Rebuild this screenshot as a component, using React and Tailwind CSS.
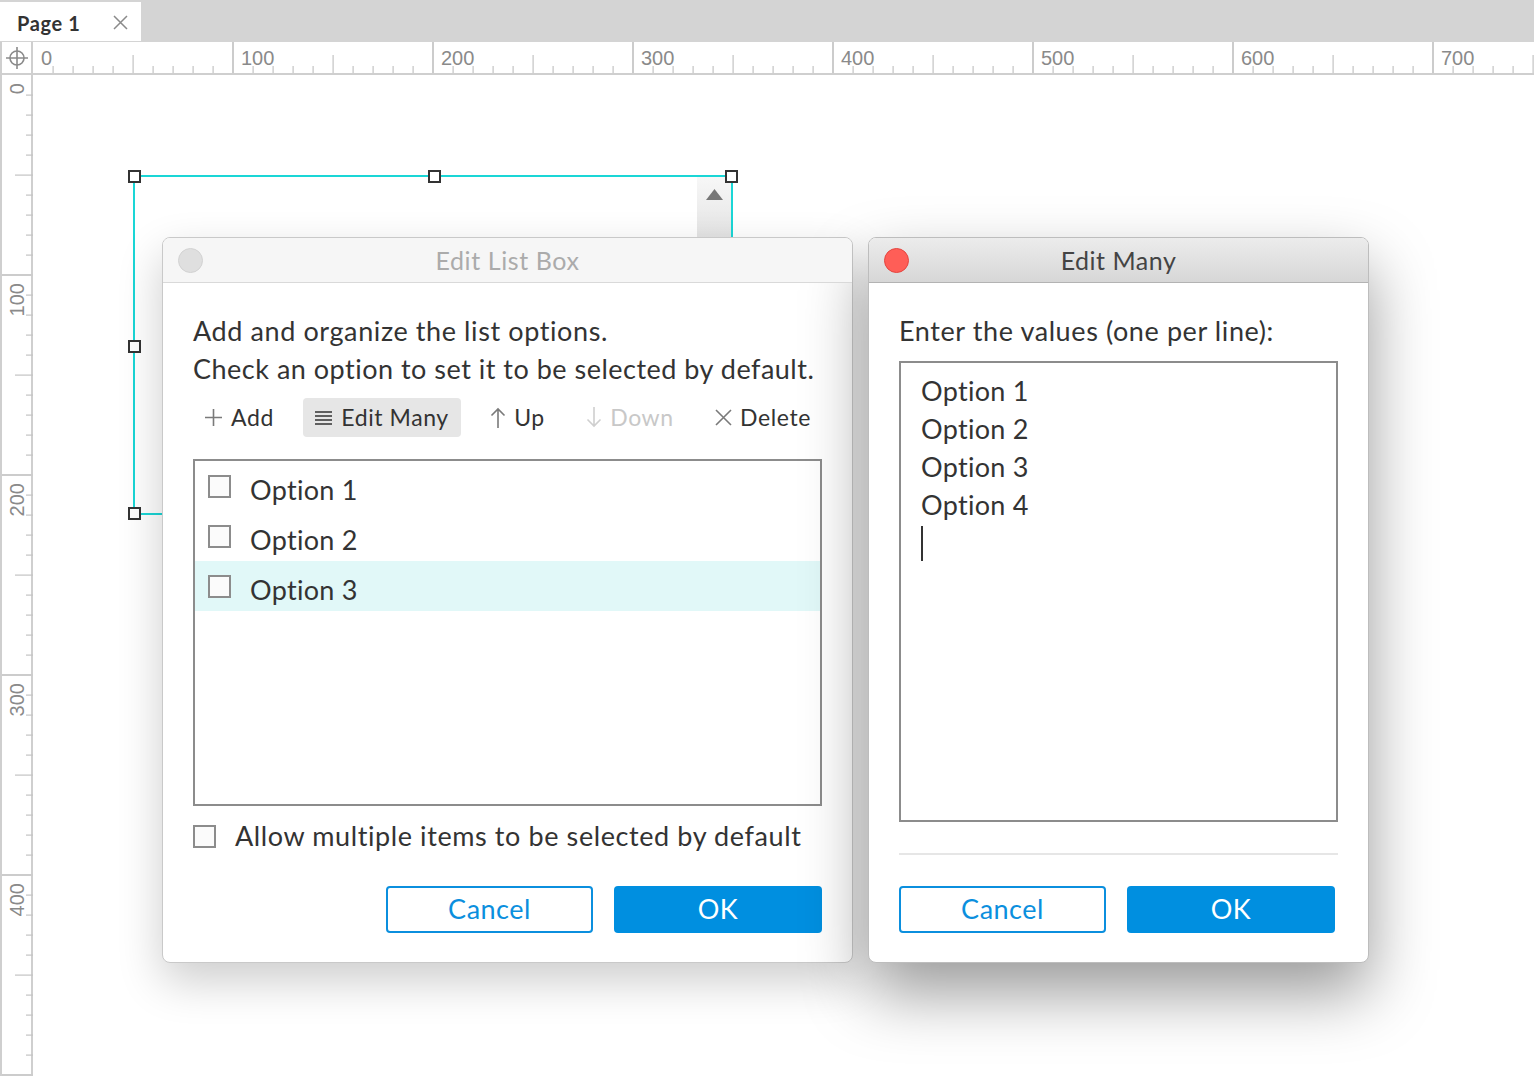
import React from "react";

const font = "font-['Lato','Noto_Sans',sans-serif]";

const HRuler = () => {
  const ticks = [];
  for (let j = 0; j <= 76; j++) {
    const x = j * 20;
    if (j % 10 === 0) continue;
    const h = j % 5 === 0 ? 18 : 7;
    ticks.push(<rect key={j} x={x - 0.5} y={31 - h} width="1.2" height={h} fill="#c4c4c4" />);
  }
  const majors = [];
  for (let k = 1; k <= 7; k++) {
    majors.push(<rect key={"m" + k} x={k * 200 - 1} y="0" width="2" height="31" fill="#cccccc" />);
  }
  const labels = [];
  for (let k = 0; k <= 7; k++) {
    labels.push(
      <text key={"l" + k} x={k * 200 + 8} y="23" fontSize="20" fill="#8a8a8a" fontFamily="Liberation Sans, Arial, sans-serif">
        {k * 100}
      </text>
    );
  }
  return (
    <svg width="1501" height="31" className="block">
      {ticks}
      {majors}
      {labels}
    </svg>
  );
};

const VRuler = () => {
  const ticks = [];
  for (let j = 0; j <= 50; j++) {
    const y = j * 20;
    if (j % 10 === 0) continue;
    const w = j % 5 === 0 ? 18 : 7;
    ticks.push(<rect key={j} x={31 - w} y={y - 0.5} width={w} height="1.2" fill="#c4c4c4" />);
  }
  const majors = [];
  for (let k = 1; k <= 5; k++) {
    majors.push(<rect key={"m" + k} x="0" y={k * 200 - 1} width="31" height="2" fill="#cccccc" />);
  }
  const labels = [];
  for (let k = 0; k <= 4; k++) {
    const y = k * 200 + 8;
    labels.push(
      <text
        key={"l" + k}
        x="22"
        y={y}
        fontSize="20"
        fill="#8a8a8a"
        textAnchor="end"
        transform={`rotate(-90 22 ${y})`}
        fontFamily="Liberation Sans, Arial, sans-serif"
      >
        {k * 100}
      </text>
    );
  }
  return (
    <svg width="31" height="1001" className="block">
      {ticks}
      {majors}
      {labels}
    </svg>
  );
};

const Handle = ({ className }) => (
  <div className={`absolute w-[13px] h-[13px] bg-white border-2 border-[#333] ${className}`}></div>
);

const Checkbox = () => (
  <div className="w-[23px] h-[23px] border-2 border-[#8c8c8c] bg-[#fbfbfb] shrink-0"></div>
);

const PlusIcon = () => (
  <svg width="19" height="19" viewBox="0 0 19 19" className="mr-[8px]">
    <path d="M9.5 1v17M1 9.5h17" stroke="#7a7a7a" strokeWidth="1.6" />
  </svg>
);

const LinesIcon = () => (
  <svg width="17" height="15" viewBox="0 0 17 15" className="mr-[9px]">
    <path d="M0 2h17M0 6h17M0 10h17M0 14h17" stroke="#333" strokeWidth="1.6" />
  </svg>
);

const ArrowIcon = ({ down, color }) => (
  <svg width="16" height="21" viewBox="0 0 16 21" className="mr-[8px]">
    {down ? (
      <path d="M8 0v19M1.5 12.5L8 19l6.5-6.5" stroke={color} strokeWidth="1.6" fill="none" />
    ) : (
      <path d="M8 21V2M1.5 8.5L8 2l6.5 6.5" stroke={color} strokeWidth="1.6" fill="none" />
    )}
  </svg>
);

const XIcon = () => (
  <svg width="17" height="17" viewBox="0 0 17 17" className="mr-[8px]">
    <path d="M1 1l15 15M16 1L1 16" stroke="#7a7a7a" strokeWidth="1.6" />
  </svg>
);

const ToolBtn = ({ icon, label, active, muted }) => (
  <div
    className={`flex items-center h-[39px] px-[12px] rounded-[4px] text-[23px] tracking-[0.6px] ${active ? "bg-[#e6e6e6]" : ""} ${
      muted ? "text-[#c8c8c8]" : "text-[#333]"
    }`}
  >
    {icon}
    <span>{label}</span>
  </div>
);

const Buttons = () => (
  <div className="flex gap-[21px]">
    <button className="w-[207px] h-[47px] rounded-[4px] border-2 border-[#0b8fde] text-[#0b8fde] text-[27px] tracking-[0.5px] bg-white">
      Cancel
    </button>
    <button className="w-[208px] h-[47px] rounded-[4px] bg-[#008fe0] text-white text-[27px] tracking-[0.5px]">OK</button>
  </div>
);

const EditListBox = () => (
  <div className="w-[691px] h-[726px] bg-white rounded-[8px] border border-[#c9c9c9] shadow-[0_18px_45px_rgba(0,0,0,0.2)] overflow-hidden flex flex-col">
    <div className="relative h-[45px] bg-[#f6f6f6] border-b border-[#d9d9d9] flex items-center justify-center shrink-0">
      <div className="absolute left-[15px] top-[10px] w-[25px] h-[25px] rounded-full bg-[#dfdfdf] border border-[#d2d2d2]"></div>
      <span className="text-[25px] tracking-[0.6px] text-[#ababab] pt-[2px]">Edit List Box</span>
    </div>
    <div className="px-[30px] pt-[29px] flex flex-col text-[#333]">
      <p className="text-[27px] leading-[38px] tracking-[0.6px]">Add and organize the list options.</p>
      <p className="text-[27px] leading-[38px] tracking-[0.5px]">Check an option to set it to be selected by default.</p>
      <div className="flex justify-between mt-[10px] ml-[-1px] mr-[-1px]">
        <ToolBtn icon={<PlusIcon />} label="Add" />
        <ToolBtn icon={<LinesIcon />} label="Edit Many" active />
        <ToolBtn icon={<ArrowIcon color="#7a7a7a" />} label="Up" />
        <ToolBtn icon={<ArrowIcon down color="#cfcfcf" />} label="Down" muted />
        <ToolBtn icon={<XIcon />} label="Delete" />
      </div>
      <div className="mt-[22px] h-[347px] border-2 border-[#8c8c8c] flex flex-col">
        {["Option 1", "Option 2", "Option 3"].map((o, i) => (
          <div
            key={o}
            className={`h-[50px] flex items-center pl-[13px] gap-[19px] text-[27px] tracking-[0.3px] ${i === 2 ? "bg-[#e1f8f8]" : ""}`}
          >
            <Checkbox />
            <span className="leading-none pt-[6px]">{o}</span>
          </div>
        ))}
      </div>
      <div className="mt-[11px] h-[38px] flex items-center gap-[19px] text-[27px] tracking-[0.6px]">
        <Checkbox />
        <span>Allow multiple items to be selected by default</span>
      </div>
      <div className="mt-[31px] flex justify-end">
        <Buttons />
      </div>
    </div>
  </div>
);

const EditMany = () => (
  <div className="w-[501px] h-[726px] bg-white rounded-[8px] border border-[#bdbdbd] shadow-[0_30px_65px_rgba(0,0,0,0.4)] overflow-hidden flex flex-col">
    <div className="relative h-[45px] bg-gradient-to-b from-[#ececec] to-[#d7d7d7] border-b border-[#b3b3b3] flex items-center justify-center shrink-0">
      <div className="absolute left-[15px] top-[10px] w-[25px] h-[25px] rounded-full bg-[#ff5e57] border border-[#e4453f]"></div>
      <span className="text-[25px] tracking-[0.5px] text-[#444] pt-[2px]">Edit Many</span>
    </div>
    <div className="px-[30px] pt-[29px] flex flex-col text-[#333]">
      <p className="text-[27px] leading-[38px] tracking-[0.6px]">Enter the values (one per line):</p>
      <div className="mt-[11px] h-[461px] w-[439px] border-2 border-[#8c8c8c] pl-[20px] pt-[9px] text-[27px] leading-[38px] tracking-[0.3px]">
        <div>Option 1</div>
        <div>Option 2</div>
        <div>Option 3</div>
        <div>Option 4</div>
        <div className="mt-[2px] w-[2px] h-[35px] bg-[#333]"></div>
      </div>
      <div className="mt-[31px] h-[2px] w-[439px] bg-[#e6e6e6]"></div>
      <div className="mt-[31px]">
        <Buttons />
      </div>
    </div>
  </div>
);

export default function App() {
  return (
    <div className={`w-[1534px] h-[1076px] overflow-hidden bg-white ${font}`}>
      <div className="h-[42px] bg-[#d4d4d4] pt-[2px]">
        <div className="w-[141px] h-[39px] bg-white flex items-center pl-[17px] pr-[13px] pt-[2px] justify-between">
          <span className="text-[20px] tracking-[0.6px] font-bold text-[#333]">Page 1</span>
          <svg width="15" height="15" viewBox="0 0 15 15">
            <path d="M1 1l13 13M14 1L1 14" stroke="#8a8a8a" strokeWidth="1.5" />
          </svg>
        </div>
      </div>
      <div className="flex h-[33px] border-b-2 border-[#cfcfcf]">
        <div className="w-[33px] h-full border-r-2 border-l-2 border-[#cfcfcf] flex items-center justify-center">
          <svg width="22" height="22" viewBox="0 0 22 22">
            <circle cx="11" cy="11" r="7" stroke="#8a8a8a" strokeWidth="1.6" fill="none" />
            <path d="M11 0v22M0 11h22" stroke="#8a8a8a" strokeWidth="1.6" />
          </svg>
        </div>
        <HRuler />
      </div>
      <div className="flex">
        <div className="w-[33px] border-r-2 border-l-2 border-[#cfcfcf] shrink-0">
          <VRuler />
        </div>
        <div className="relative flex-1 h-[1001px] bg-white">
          {/* selected list box on canvas */}
          <div className="absolute left-[100px] top-[100px] w-[600px] h-[340px] border-2 border-[#1ad6d6]">
            <div className="absolute right-0 top-0 w-[34px] h-[61px] bg-gradient-to-b from-[#f7f7f7] to-[#e4e4e4] flex justify-center pt-[12px]">
              <svg width="17" height="11" viewBox="0 0 17 11">
                <path d="M8.5 0L17 11H0z" fill="#777" />
              </svg>
            </div>
            <Handle className="left-[-7px] top-[-7px]" />
            <Handle className="left-[293px] top-[-7px]" />
            <Handle className="right-[-7px] top-[-7px]" />
            <Handle className="left-[-7px] top-[163px]" />
            <Handle className="left-[-7px] bottom-[-7px]" />
          </div>
          <div className="relative flex gap-[15px] pl-[129px] pt-[162px]">
            <EditListBox />
            <EditMany />
          </div>
        </div>
      </div>
    </div>
  );
}
